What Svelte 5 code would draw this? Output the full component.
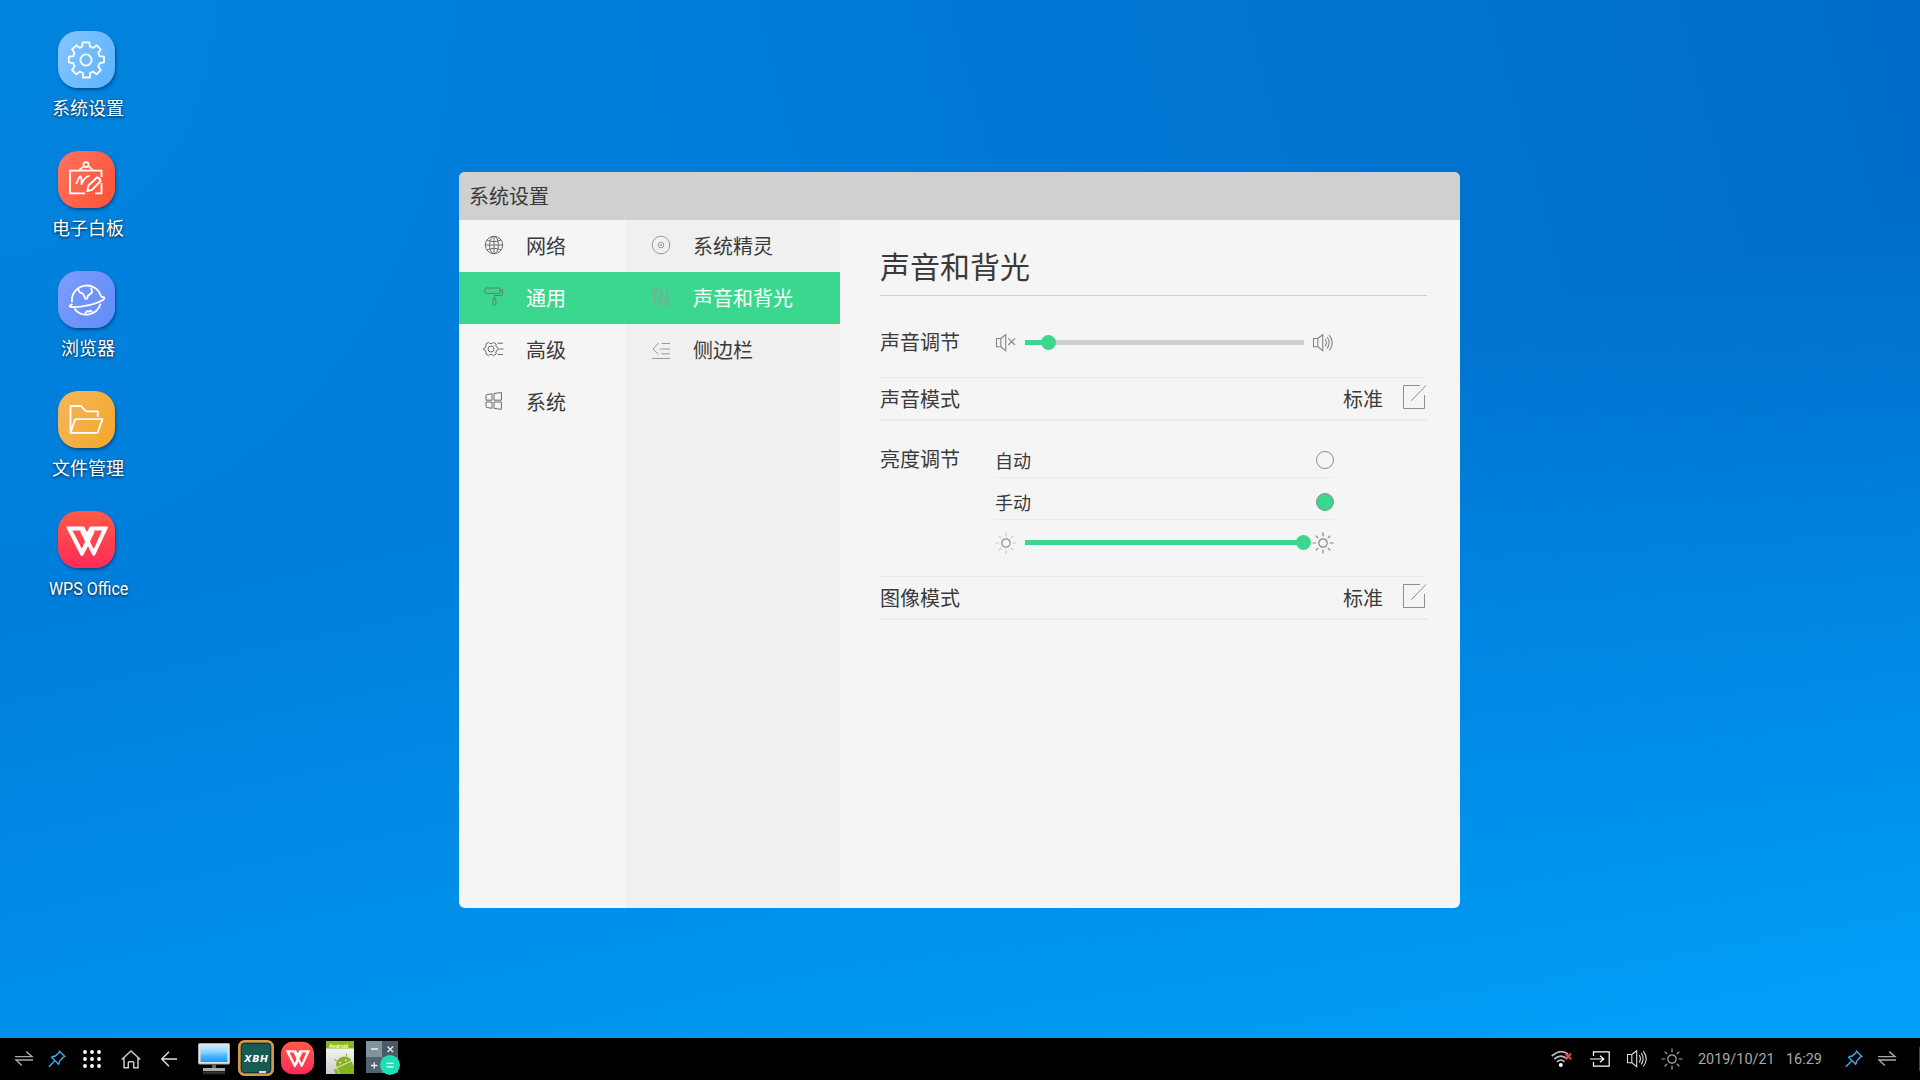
<script>
  const shortcuts = [
    { id: 'settings', label: '系统设置' },
    { id: 'board', label: '电子白板' },
    { id: 'browser', label: '浏览器' },
    { id: 'files', label: '文件管理' },
    { id: 'wps', label: 'WPS Office', latin: true }
  ];
  const sections = [
    { id: 'network', label: '网络' },
    { id: 'general', label: '通用' },
    { id: 'advanced', label: '高级' },
    { id: 'system', label: '系统' }
  ];
  const pages = [
    { id: 'assistant', label: '系统精灵' },
    { id: 'sound', label: '声音和背光' },
    { id: 'sidebar', label: '侧边栏' }
  ];
  let section = $state('general');
  let page = $state('sound');
  let brightnessMode = $state('manual');
  let volume = $state(8.7);
  let brightness = $state(100);
</script>

{#snippet wpsMark()}
  <path fill="#fff" fill-rule="evenodd" d="M8.5 15.5H26L29 21L32 15.5H49.5Q50.2 16 49.8 17L37 44.2Q36 45.8 34.5 44.2L30 35L25.3 44.2Q24 45.8 22.6 44.2L8.8 17.5ZM14.5 19.5L24 38L27.3 30.5L22.3 19.5ZM35 19.5L30.5 28L35.8 38L44 19.5Z" />
  <path d="M24 19.8L29.2 30M35 19.5L25 40" fill="none" stroke="#fff" stroke-width="4" />
{/snippet}

{#snippet pin()}
  <svg width="18" height="18" viewBox="0 0 18 18" fill="none" stroke="#43a9ee" stroke-width="1.4"><path d="M11.5 1.2L16.8 6.5L15.2 7.2L11.4 11.4Q11.6 13 10.6 14.3L3.7 7.2Q5 6 6.7 6.4L10.7 3ZM6.4 11.2L.8 16.8" /></svg>
{/snippet}

{#snippet swap()}
  <svg width="18" height="16" viewBox="0 0 18 16" fill="none" stroke="#aaa" stroke-width="1.4"><path d="M0 5.6H17L11.2 .5M18 9H1L6.8 14.6" /></svg>
{/snippet}

{#snippet speaker(kind)}
  <svg class="glyph" width="20" height="18" viewBox="0 0 20 18" fill="none" stroke="currentColor" stroke-width="1.1">
    <path d="M.5 4.5H4.8V12.8H.5ZM4.8 4.5L9.7 .7V16.7L4.8 12.8" />
    {#if kind === 'mute'}<path d="M12.3 4.4L19 11M19 4.4L12.3 11" />
    {:else}<path d="M12.2 5Q14.6 8.7 12.2 12.4M14.2 3Q18 8.7 14.2 14.4M16.2 1.1Q22.2 8.7 16.2 16.5" />{/if}
  </svg>
{/snippet}

{#snippet sun(r)}
  <svg class="glyph" width="22" height="22" viewBox="0 0 22 22" fill="none" stroke="currentColor" stroke-width="1.2">
    <circle cx="11" cy="11" r={r} />
    <path class="rays" d="M11 .5V4.2M11 17.8V21.5M.5 11H4.2M17.8 11H21.5M3.7 3.7L6.2 6.2M15.8 15.8L18.3 18.3M3.7 18.3L6.2 15.8M15.8 6.2L18.3 3.7" />
  </svg>
{/snippet}

{#snippet edit()}
  <svg width="24" height="25" viewBox="0 0 24 25" fill="none" stroke="#8e8e8e"><path d="M17 .5H.5V23.5H21.5V10M8.2 15.8L23 .4" /></svg>
{/snippet}

<div class="screen">
  <main class="desktop">
    <nav class="shortcuts">
      {#each shortcuts as item}
        <div class="shortcut">
          <div class="tile {item.id}">
            <svg width="57" height="57" viewBox="0 0 57 57" fill="none" stroke="#fff" stroke-width="1.8" stroke-linejoin="round">
              {#if item.id === 'settings'}
                <circle cx="28" cy="29" r="5.6" />
                <path d="M24.7 11.4H31.3L32 15.5L35.3 16.9L38.8 14.3L42.8 18.5L40.3 22L41.5 25.1L46 25.7V31.4L41.6 32.2L40.2 35.4L42.8 39L38.7 43.2L35.2 40.7L32 42V46.5H25V42L21.7 40.7L18.2 43.2L14.1 39L16.6 35.4L15.3 32.2L10.8 31.4V25.7L15.3 25.1L16.6 22L14.1 18.5L18.2 14.3L21.7 16.9L24.2 15.5Z" />
              {:else if item.id === 'board'}
                <path d="M43.5 26V19.6H12V42.3H27M37 42.3H43.5V32M21 19.3L26 14.8M35 19.3L30.2 14.8M18.3 33Q22 23 23 26T23.5 33Q28 24 31.5 25.2M30.5 34.5L39 26.5Q42 27 42.5 30L34 38.8L29.3 40.2Z" />
                <circle cx="28" cy="13.6" r="2.5" />
              {:else if item.id === 'browser'}
                <path d="M14 31A14.8 14.8 0 0 1 43 25.5M42.5 32.8A14.8 14.8 0 0 1 16.3 37.5M14.5 32.9Q9.5 35.8 13.2 36C24 36.5 39 33 45.6 28.4Q48 25.5 43 26M20.5 18.2Q21 22.5 24.8 22.4Q27 27 27.5 28Q30 28 29.5 25.2L34.2 21.3L33 16.7M27.2 42.8L28.7 40.2Q31 41 32.8 39.5L34.2 41.7" />
              {:else if item.id === 'files'}
                <path d="M12.5 41V15H23L28 20.3H39.8V26M12.5 41.8L17.2 28.1H44.4L39.6 41.8Z" />
              {:else}
                <g stroke="none">{@render wpsMark()}</g>
              {/if}
            </svg>
          </div>
          <span class="caption" class:latin={item.latin}>{item.label}</span>
        </div>
      {/each}
    </nav>

    <section class="window">
      <header class="titlebar">系统设置</header>
      <div class="body">
        <nav class="menu primary">
          {#each sections as item}
            <button class:active={section === item.id} onclick={() => (section = item.id)}>
              <svg width="20" height="20" viewBox="0 0 20 20" fill="none" stroke="#6c6c6c" stroke-width="1">
                {#if item.id === 'network'}
                  <circle cx="10" cy="10" r="8.7" /><ellipse cx="10" cy="10" rx="4.4" ry="8.7" /><path d="M10 1.3V18.7M1.3 10H18.7M2.8 5Q10 8.3 17.2 5M2.8 15Q10 11.7 17.2 15" />
                {:else if item.id === 'general'}
                  <rect x="1" y="1" width="15.2" height="5.4" rx="1.2" /><path d="M16.3 3H18.4V7.3Q18.4 8.5 17.2 8.5H10.4V11.5M9.2 11.5H11.7L12 17.5Q10.4 19.5 8.8 17.5Z" />
                {:else if item.id === 'advanced'}
                  <circle cx="7" cy="10" r="3" /><path d="M4.5 3.3L5.6 4.4H8.4L9.5 3.3L12.2 5L11.8 6.8L13.2 9L14.4 9.3V10.7L13.2 11L11.8 13.2L12.2 15L9.5 16.7L8.4 15.6H5.6L4.5 16.7L1.8 15L2.2 13.2L.9 11L-.4 10.7V9.3L.9 9L2.2 6.8L1.8 5ZM13.7 4.2H19M15.5 10H19.5M13.7 15.5H19" />
                {:else}
                  <path d="M2 4.7Q2 3.8 3 3.6L8 2.8V9.2H2ZM10 2.5L17.4 1.5V9.2H10ZM2 11H8V17.3L3 16.5Q2 16.3 2 15.4ZM10 11H17.4V18.3L10 17.4Z" />
                {/if}
              </svg>
              <span>{item.label}</span>
            </button>
          {/each}
        </nav>
        <nav class="menu secondary">
          {#each pages as item}
            <button class:active={page === item.id} onclick={() => (page = item.id)}>
              <svg width="20" height="20" viewBox="0 0 20 20" fill="none" stroke="#999" stroke-width="1">
                {#if item.id === 'assistant'}
                  <circle cx="10" cy="10" r="8.8" /><circle cx="10" cy="10" r="2.8" /><circle cx="10" cy="10" r=".6" fill="#777" />
                {:else if item.id === 'sound'}
                  <circle cx="3.8" cy="3.4" r="2.4" /><circle cx="9.8" cy="11" r="2.4" /><circle cx="15.7" cy="17" r="2.4" /><path d="M3.8 5.8V19M9.8 2V8.6M9.8 13.4V19M15.7 2V14.6" />
                {:else}
                  <path d="M7.5 4L2 10L7.5 15.3M10.5 4.5H19M10.5 10H19M10.5 14.8H19M1.2 19.5H19M9.3 9.5V11" />
                {/if}
              </svg>
              <span>{item.label}</span>
            </button>
          {/each}
        </nav>

        <div class="content">
          <h1>声音和背光</h1>
          <div class="row sound">
            <span class="name">声音调节</span>
            <div class="slider">
              {@render speaker('mute')}
              <div class="track"><div class="fill" style="width: {volume}%"></div><div class="thumb"></div></div>
              {@render speaker('loud')}
            </div>
          </div>
          <div class="row mode"><span class="name">声音模式</span><span class="value">标准</span>{@render edit()}</div>
          <div class="row light">
            <span class="name">亮度调节</span>
            <div class="options">
              <button class="option" onclick={() => (brightnessMode = 'auto')}><span>自动</span><i class:on={brightnessMode === 'auto'}></i></button>
              <button class="option" onclick={() => (brightnessMode = 'manual')}><span>手动</span><i class:on={brightnessMode === 'manual'}></i></button>
              <div class="slider bright">
                <span class="dim">{@render sun(4.2)}</span>
                <div class="track"><div class="fill" style="width: {brightness}%"></div><div class="thumb"></div></div>
                {@render sun(4.2)}
              </div>
            </div>
          </div>
          <div class="row mode"><span class="name">图像模式</span><span class="value">标准</span>{@render edit()}</div>
        </div>
      </div>
    </section>
  </main>

  <footer class="taskbar">
    <div class="tools">
      {@render swap()}
      {@render pin()}
      <svg width="18" height="18" viewBox="0 0 18 18" fill="#fff">
        {#each [2, 9, 16] as y}{#each [2, 9, 16] as x}<circle cx={x} cy={y} r="1.9" />{/each}{/each}
      </svg>
      <svg class="home" width="20" height="19" viewBox="0 0 20 19" fill="none" stroke="#ccc" stroke-width="1.5"><path d="M.7 9.5L10 1L19.3 9.5M3 8V17.8H7.3V12.8Q7.3 11.8 8.3 11.8H11.7Q12.7 11.8 12.7 12.8V17.8H17V8" /></svg>
      <svg class="back" width="16" height="16" viewBox="0 0 16 16" fill="none" stroke="#ddd" stroke-width="1.5"><path d="M16 8H1M8 .7L.8 8L8 15.3" /></svg>
    </div>
    <div class="apps">
      <svg width="32" height="34" viewBox="0 0 32 34">
        <defs><linearGradient id="lcd" x2="0" y2="1"><stop stop-color="#b9e7ff" /><stop offset="1" stop-color="#1499fc" /></linearGradient><linearGradient id="stand" x2="0" y2="1"><stop stop-color="#888" /><stop offset="1" stop-color="#333" /></linearGradient></defs>
        <rect x=".5" y="2.5" width="31" height="20.5" rx="1" fill="#e4e4e4" stroke="#aaa" /><rect x="2.5" y="4.5" width="27" height="16.5" fill="url(#lcd)" /><path d="M2.5 4.5H29.5V12Q16 11 2.5 14Z" fill="#fff" opacity=".16" /><rect x="14" y="23.5" width="4" height="3.5" fill="#666" /><rect x="5" y="27" width="22" height="3" fill="#aaa" /><rect x="5" y="30.5" width="22" height="3" fill="url(#stand)" opacity=".5" />
      </svg>
      <svg width="36" height="36" viewBox="0 0 36 36">
        <rect x="1.5" y="1.5" width="33" height="33" rx="5" fill="#175b55" stroke="#d48a36" stroke-width="2.6" /><rect x=".8" y=".8" width="34.4" height="34.4" rx="5.5" fill="none" stroke="#ffc66c" stroke-width=".7" /><rect x="3.4" y="3.4" width="29.2" height="29.2" rx="3" fill="none" stroke="#0b3433" /><rect x="21" y="31" width="7" height="2" fill="#ddd" />
        <text x="18.5" y="21.5" text-anchor="middle" class="chalk">XBH</text>
      </svg>
      <svg width="33" height="34" viewBox="0 0 57 58"><defs><linearGradient id="wps" x2="0" y2="1"><stop stop-color="#ff5b43" /><stop offset="1" stop-color="#ff2b59" /></linearGradient></defs><rect y="1" width="57" height="56" rx="20" fill="url(#wps)" />{@render wpsMark()}</svg>
      <svg width="30" height="34" viewBox="0 0 30 34">
        <defs><linearGradient id="paper" x2="0" y2="1"><stop stop-color="#fff" /><stop offset="1" stop-color="#ccc" /></linearGradient><clipPath id="sheet"><rect x="1" width="28" height="33" /></clipPath></defs>
        <rect x="1" width="28" height="33" fill="url(#paper)" /><rect x="1" width="28" height="7.5" fill="#8ab817" /><text x="4" y="6.8" class="doc">Android</text>
        <g clip-path="url(#sheet)" fill="#86b31e"><g transform="rotate(-24 20 25)"><path d="M12 22.5A8 7 0 0 1 28 22.5ZM12 23.7H28V36H12ZM8.3 24h2.8v9H8.3Z" /><path d="M14.5 17L13 14.5M25 17L26.5 14.5" stroke="#86b31e" /><circle cx="17" cy="20" r=".8" fill="#fff" /><circle cx="23" cy="20" r=".8" fill="#fff" /></g></g>
      </svg>
      <svg width="35" height="36" viewBox="0 0 35 36">
        <rect x="0" y="1" width="32" height="32" rx="1" fill="#718591" /><path d="M0 1H16V17H0Z" fill="#80939f" /><path d="M16 1H32V17H16Z" fill="#4b5a65" /><path d="M0 17H16V33H0Z" fill="#51646f" />
        <path d="M5 9H12M21.5 6.5L27 12M27 6.5L21.5 12M5 25.5H11.5M8.2 22.2V28.8" stroke="#eee" stroke-width="1.3" /><circle cx="24" cy="25" r="10" fill="#1ddfb3" /><path d="M20.5 23.4H27.5M20.5 26.8H27.5" stroke="#fff" stroke-width="1.2" />
      </svg>
    </div>
    <div class="status">
      <svg class="wifi" width="22" height="18" viewBox="0 0 22 18" fill="none" stroke="#bbb" stroke-width="1.7"><path d="M.8 6Q9.5-1.8 17 4M3.3 9Q9.8 3.2 16.3 9M6 11.8Q9.8 8.5 13.5 11.8" /><circle cx="9.8" cy="15" r="2" fill="#fff" stroke="none" /><path d="M14.5 3.5L20 9.2M20 3.5L14.5 9.2" stroke="#f24b35" stroke-width="2" /></svg>
      <svg class="enter" width="20" height="16" viewBox="0 0 20 16" fill="none" stroke="#fff" stroke-width="1.2"><path d="M3.5 5V.8H19.2V15.2H3.5V11M0 8H13.5M10 4.8L13.8 8L10 11.2" /></svg>
      <span class="vol">{@render speaker('loud')}</span>
      <span class="lum">{@render sun(4.2)}</span>
      <span class="date">2019/10/21</span>
      <span class="time">16:29</span>
      {@render pin()}
      <span class="last">{@render swap()}</span>
      <span class="edge"></span>
    </div>
  </footer>
</div>

<style>
  :global(body) { margin: 0; }
  .screen { width: 1920px; height: 1080px; display: flex; flex-direction: column; overflow: hidden; font-family: "Noto Sans CJK SC", sans-serif; color: #3a3a3a; background: radial-gradient(ellipse 500px 600px at 0 0, rgba(0, 137, 224, .55), transparent), linear-gradient(168deg, transparent 42%, rgba(0, 160, 248, .95) 92%), linear-gradient(75deg, #007edb 40%, #006bc9 100%); }
  svg { display: block; flex: none; overflow: visible; }
  button { font: inherit; color: inherit; background: none; border: 0; padding: 0; text-align: left; }
  .desktop { height: 1038px; display: flex; align-items: flex-start; }
  .shortcuts { width: 459px; padding-top: 31px; box-sizing: border-box; display: flex; flex-direction: column; }
  .shortcut { height: 120px; width: 176px; display: flex; flex-direction: column; align-items: center; }
  .tile { width: 57px; height: 57px; margin-right: 3px; border-radius: 20px; box-shadow: 1px 2px 3px rgba(0, 30, 70, .5); }
  .settings { background: linear-gradient(120deg, #86c6ff, #5cb2fc); }
  .board { background: linear-gradient(120deg, #ff735f, #ff5135); }
  .browser { background: linear-gradient(120deg, #7d9cff, #628cf8); }
  .files { background: linear-gradient(120deg, #f5b65b, #f5a728); }
  .wps { background: linear-gradient(#ff5b43, #ff2b59); }
  .caption { margin-top: 6px; font-size: 18px; line-height: 26px; color: #fff; text-shadow: 0 1px 3px rgba(0, 0, 0, .8); white-space: nowrap; }
  .latin { margin: 8px 0 0 2px; font-family: Roboto, sans-serif; transform: scaleX(.89); }

  .window { width: 1001px; height: 736px; margin-top: 172px; border-radius: 6px; overflow: hidden; background: #f5f5f5; display: flex; flex-direction: column; }
  .titlebar { height: 48px; line-height: 48px; padding-left: 10px; background: #d0d0d0; font-size: 20px; }
  .body { flex: 1; display: flex; }
  .menu { display: flex; flex-direction: column; font-size: 20px; }
  .menu button { height: 52px; display: flex; align-items: center; padding-left: 25px; gap: 22px; }
  .menu svg { margin-bottom: 2px; }
  .menu span { margin-bottom: 2px; }
  .menu .active { background: #3bd78f; color: #fff; }
  .menu .active svg { opacity: .85; }
  .primary { width: 167px; }
  .secondary { width: 214px; background: #f0f0f0; }

  .content { width: 547px; padding: 22px 0 0 40px; font-size: 20px; }
  h1 { margin: 0; height: 53px; line-height: 46px; font-size: 30px; font-weight: 400; border-bottom: 1px solid #ccc; }
  .row { display: flex; }
  .name { width: 115px; flex: none; line-height: 30px; }
  .sound { box-sizing: border-box; height: 82px; align-items: flex-start; border-bottom: 1px solid #ececec; }
  .sound .name { margin-top: 31px; }
  .sound .slider { margin-top: 37px; height: 19px; }
  .slider { display: flex; align-items: center; padding-left: 1px; color: #858585; }
  .track { width: 279px; height: 5px; margin: 0 9px; background: #d0d0d0; display: flex; align-items: center; }
  .fill { height: 5px; background: #3bd78f; flex: none; }
  .thumb { width: 15px; height: 15px; margin-left: -8px; border-radius: 50%; background: #3bd78f; flex: none; }
  .mode { height: 41px; align-items: center; border-bottom: 2px solid #ececec; }
  .value { margin-left: auto; width: 60px; }
  .mode svg { margin-bottom: 3px; }
  .light { height: 155px; border-bottom: 1px solid #ececec; }
  .light .name { margin-top: 23px; }
  .options { width: 339px; padding-top: 15px; }
  .option { display: flex; align-items: center; justify-content: space-between; width: 339px; height: 42px; border-bottom: 1px solid #ececec; font-size: 18px; box-sizing: border-box; }
  .option span { margin-top: 7px; line-height: 24px; }
  .option i { box-sizing: border-box; width: 18px; height: 18px; margin-top: 7px; border: 1px solid #8e8e8e; border-radius: 50%; }
  .option .on { background: #3bd78f; }
  .bright { height: 21px; margin-top: 12px; padding-left: 0; }
  .bright .track { margin: 0 8px; }
  .dim { color: #929292; }
  .dim :global(.rays) { stroke: #ccc; }

  .taskbar { height: 42px; background: #000; display: flex; justify-content: space-between; }
  .tools { width: 198px; box-sizing: border-box; padding-left: 15px; display: flex; align-items: center; gap: 15px; }
  .tools svg:nth-child(3) { margin-left: 2px; }
  .home { margin-left: 5px; }
  .back { margin-left: 5px; }
  .apps { display: flex; align-items: center; gap: 8px; padding-bottom: 3px; margin-right: auto; }
  .apps svg:nth-child(3) { margin-left: -1px; }
  .apps svg:nth-child(4), .apps svg:nth-child(5) { margin-left: 3px; }
  .chalk { font: italic 700 9.5px "DejaVu Sans", sans-serif; letter-spacing: .6px; fill: #fff; }
  .doc { font: 700 5px "Liberation Sans", sans-serif; fill: #fff; }
  .status { display: flex; align-items: center; font: 14.4px Roboto, sans-serif; color: #aaa; }
  .enter { margin-left: 17px; }
  .vol { margin-left: 17px; color: #ddd; }
  .lum { margin-left: 14px; color: #aaa; }
  .date { width: 88px; margin-left: 15px; }
  .time { width: 59px; }
  .last { margin-left: 15px; }
  .edge { width: 1px; height: 24px; margin-left: 23px; background: #444; }
</style>
